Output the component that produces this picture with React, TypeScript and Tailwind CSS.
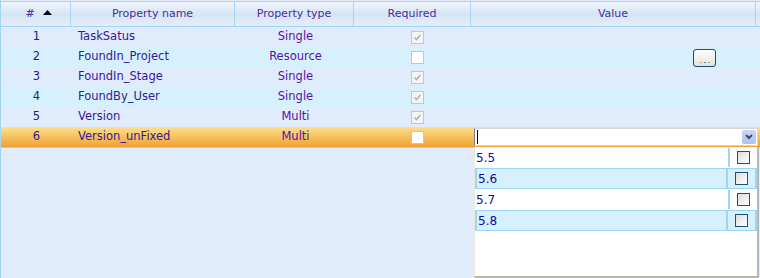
import React from "react";

type Row = {
  id: number;
  name: string;
  type: string;
  required: boolean;
  button?: boolean;
};

const rows: Row[] = [
  { id: 1, name: "TaskSatus", type: "Single", required: true },
  { id: 2, name: "FoundIn_Project", type: "Resource", required: false, button: true },
  { id: 3, name: "FoundIn_Stage", type: "Single", required: true },
  { id: 4, name: "FoundBy_User", type: "Single", required: true },
  { id: 5, name: "Version", type: "Multi", required: true },
  { id: 6, name: "Version_unFixed", type: "Multi", required: false },
];

const options = ["5.5", "5.6", "5.7", "5.8"];

const ReadonlyCheck = ({ checked, white }: { checked: boolean; white?: boolean }) => (
  <span
    className={`flex h-[13px] w-[13px] items-center justify-center border border-[#c6c6bd] ${
      white ? "bg-white" : "bg-[#f2f4f6]"
    }`}
  >
    {checked && (
      <svg width="9" height="9" viewBox="0 0 9 9">
        <path d="M1.5 4.5 L3.5 6.5 L7.5 2" fill="none" stroke="#b4b4ac" strokeWidth="1.6" />
      </svg>
    )}
  </span>
);

const ListCheck = () => (
  <span className="block h-[13px] w-[13px] border border-[#1c5180] bg-gradient-to-br from-[#dcdcd6] to-white" />
);

export default function App() {
  return (
    <div
      className="relative h-[278px] w-[760px] overflow-hidden border-l border-[#a3d4f3] bg-[#e0ebfc] pt-px text-[11.5px]"
      style={{ fontFamily: '"DejaVu Sans", Verdana, sans-serif' }}
    >
      {/* header */}
      <div className="flex h-[26px] border-y border-[#a3d4f3] bg-gradient-to-b from-[#f0f5fb] via-[#d6e5f4] to-[#e4edf7] text-[11px] text-[#4a2ca6]">
        <div className="flex w-[70px] items-center justify-center gap-[8px] border-r border-[#a3d4f3] pl-[6px]">
          <span>#</span>
          <svg width="9" height="5" viewBox="0 0 9 5" className="-mt-[3px]">
            <path d="M0 5 L4.5 0 L9 5 Z" fill="#000" />
          </svg>
        </div>
        <div className="flex w-[164px] items-center justify-center border-r border-[#a3d4f3]">
          Property name
        </div>
        <div className="flex w-[119px] items-center justify-center border-r border-[#a3d4f3]">
          Property type
        </div>
        <div className="flex w-[117px] items-center justify-center border-r border-[#a3d4f3]">
          Required
        </div>
        <div className="flex w-[285px] items-center justify-center border-r border-[#a3d4f3]">
          Value
        </div>
      </div>

      {/* rows */}
      {rows.map((r, i) => {
        const selected = r.id === 6;
        const bg = selected
          ? "bg-gradient-to-b from-[#fce08e] via-[#f6c15e] to-[#efa12e]"
          : i % 2 === 0
            ? "bg-[#e0ebfc]"
            : "bg-[#d6f0fd]";
        return (
          <div key={r.id} className={`flex h-[20px] ${bg}`}>
            <div className="flex w-[71px] items-center justify-center text-[#1d1d8e]">{r.id}</div>
            <div className="flex w-[164px] items-center pl-[6px] text-[#35189a]">{r.name}</div>
            <div className="flex w-[119px] items-center justify-center text-[#5512a6]">{r.type}</div>
            <div className="flex w-[117px] items-center justify-center pl-[7px]">
              <ReadonlyCheck checked={r.required} white={!r.required} />
            </div>
            <div className="flex flex-1 items-center">
              {r.button && (
                <button className="ml-[221px] mt-[1px] flex h-[18px] w-[23px] items-end justify-center rounded-[3px] border border-[#1d4a78] bg-gradient-to-b from-white to-[#e2e2dc] pb-[3px]">
                  <span className="flex gap-[2px]">
                    <span className="h-px w-[2px] bg-[#e8a030]" />
                    <span className="h-px w-[2px] bg-[#4a90d0]" />
                    <span className="h-px w-[2px] bg-[#e8a030]" />
                  </span>
                </button>
              )}
              {selected && (
                <div className="ml-[2px] flex h-[18px] w-[284px] items-center border border-[#d8d8d0] border-l-[#7a7a7a] bg-white pl-[2px] pr-[1px]">
                  <span className="h-[14px] w-px bg-black" />
                  <span className="ml-auto flex h-[14px] w-[14px] items-center justify-center rounded-[2px] bg-gradient-to-b from-[#c6d6fa] to-[#aec2f2]">
                    <svg width="8" height="6" viewBox="0 0 8 6">
                      <path d="M1 1 L4 4 L7 1" fill="none" stroke="#3e4f6e" strokeWidth="2" />
                    </svg>
                  </span>
                </div>
              )}
            </div>
          </div>
        );
      })}
      <div className="h-px bg-[#a3d4f3]" />

      {/* dropdown list */}
      <div className="absolute left-[473px] top-[147px] h-[131px] w-[285px] border-r-2 border-b-2 border-l border-[#b8b8ae] border-l-[#ece9d8] bg-white text-[12px]">
        {options.map((o, i) => {
          const alt = i % 2 === 1;
          return (
            <div
              key={o}
              className={`flex h-[21px] ${
                alt ? "border-y border-x-2 border-[#9ed5f4] bg-[#d6f0fd]" : "border-y border-transparent"
              }`}
            >
              <div className="flex flex-1 items-center pl-[1px] text-[#0c0c9e]">{o}</div>
              <div
                className={`flex w-[29px] items-center justify-center border-l-2 border-[#9ed5f4] ${
                  alt ? "" : "pr-[1px]"
                }`}
              >
                <ListCheck />
              </div>
            </div>
          );
        })}
      </div>
    </div>
  );
}
